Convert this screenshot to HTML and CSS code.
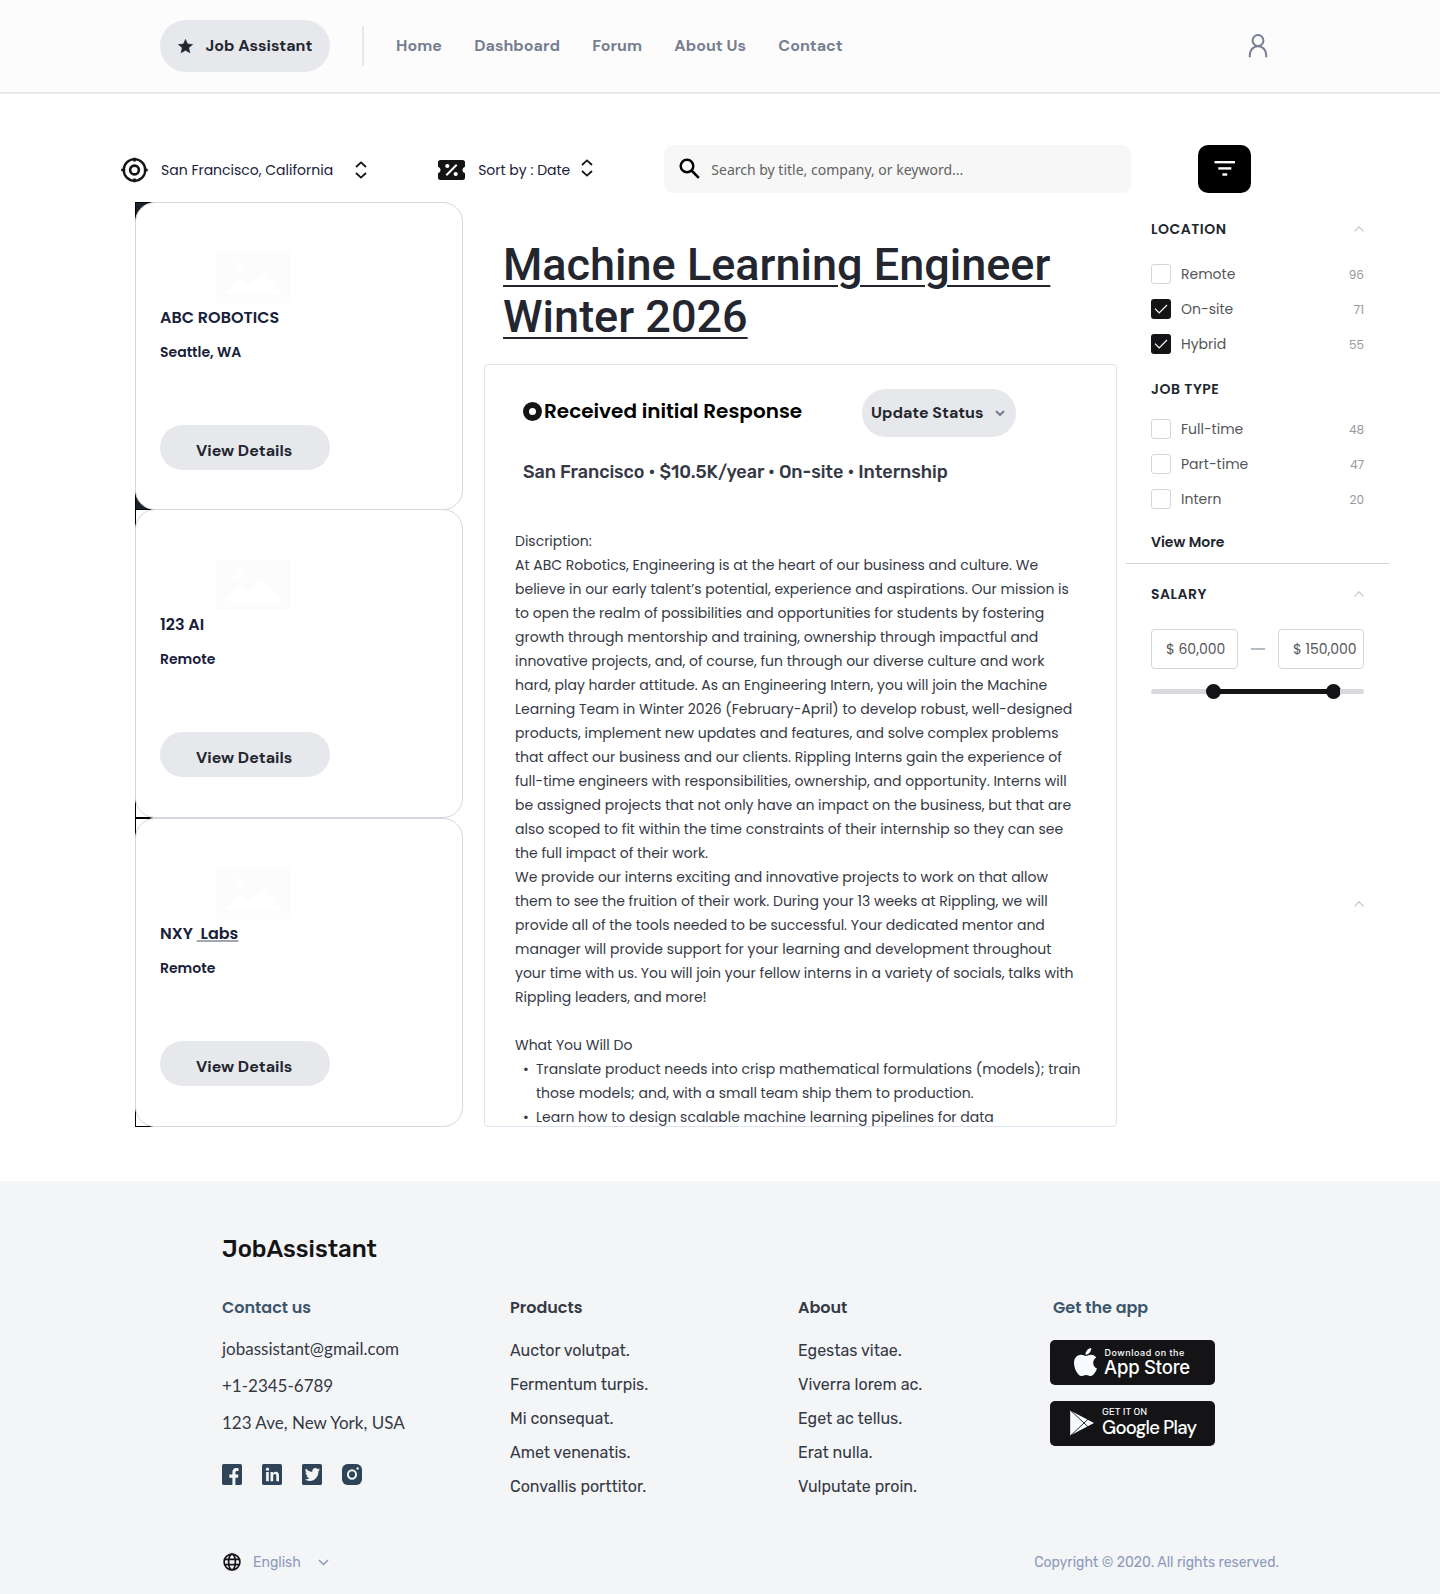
FILE: index.html
```html
<!DOCTYPE html>
<html lang="en">
<head>
<meta charset="utf-8">
<title>Job Assistant</title>
<link rel="stylesheet" href="styles.css">
</head>
<body>
<header class="topbar">
  <a class="brand"><svg width="15" height="15" viewBox="0 0 15 15"><path d="M7.5.4l2 4.6 5.1.5-3.9 3.3 1.2 5L7.5 11.200l-4.4 2.600 1.200-5L.4 5.500 5.500 5z" fill="#23262f" stroke="#23262f" stroke-width=".6" stroke-linejoin="round"/></svg>Job Assistant</a>
  <span class="topbar-rule"></span>
  <nav class="nav"><a>Home</a><a>Dashboard</a><a>Forum</a><a>About Us</a><a>Contact</a></nav>
  <svg class="user" width="20" height="24" viewBox="0 0 20 24" fill="none" stroke="#777e91" stroke-width="2"><ellipse cx="10" cy="6.500" rx="5.400" ry="5.500"/><path d="M1.800 23.200v-2.200C1.800 16 5.300 12.200 10 12.200s8.200 3.800 8.200 8.800v2.200"/></svg>
</header>

<main>
  <div class="toolbar">
    <svg class="tool-icon" width="27" height="26" viewBox="0 0 27 26" fill="none" stroke="#141416"><circle cx="13.500" cy="13" r="10.800" stroke-width="2.300"/><circle cx="13.500" cy="13" r="4.400" stroke-width="2.600"/><path d="M13.500.700v3.800M13.500 21.500v3.800M.200 13h4M22.800 13h4" stroke-width="2.600"/></svg>
    <span class="tool-label">San Francisco, California</span>
    <svg class="updown" width="12" height="18" viewBox="0 0 12 18" fill="none" stroke="#141416" stroke-width="1.800"><path d="M1 6l5-4.600L11 6M1 12l5 4.600 5-4.600"/></svg>
    <svg class="ticket" width="27" height="20" viewBox="0 0 27 20"><path d="M2.500 0h22A2.500 2.500 0 0 1 27 2.500v4.200a3.400 3.400 0 0 0 0 6.600v4.200a2.500 2.500 0 0 1-2.500 2.500h-22A2.500 2.500 0 0 1 0 17.500v-4.200a3.400 3.400 0 0 0 0-6.600V2.500A2.500 2.500 0 0 1 2.500 0z" fill="#141416"/><path d="M8.300 15.200L18.700 4.800" stroke="#fff" stroke-width="2"/><circle cx="9.300" cy="6" r="2.100" fill="#fff"/><circle cx="17.700" cy="14" r="2.100" fill="#fff"/></svg>
    <span class="tool-label">Sort by : Date</span>
    <svg class="updown sort" width="12" height="18" viewBox="0 0 12 18" fill="none" stroke="#141416" stroke-width="1.800"><path d="M1 6l5-4.600L11 6M1 12l5 4.600 5-4.600"/></svg>
    <div class="search">
      <svg width="22" height="22" viewBox="0 0 22 22" fill="none" stroke="#000" stroke-width="2.500"><circle cx="8" cy="8" r="6.300"/><path d="M12.500 12.500l7.300 7.300"/></svg>
      <span>Search by title, company, or keyword...</span>
    </div>
    <button class="filter"><svg width="22" height="16" viewBox="0 0 22 16" fill="#fff"><rect x=".500" y="0" width="20.500" height="2.400"/><rect x="4.300" y="6.200" width="13" height="2.400"/><rect x="8.400" y="12.300" width="4.800" height="2.400"/></svg></button>
  </div>

  <div class="columns">
    <div class="jobs">
      <div class="job first">
        <article class="card">
          <svg class="thumb" width="75" height="51" viewBox="0 0 75 51"><rect width="75" height="51" rx="1" fill="#fcfcfd"/><circle cx="23.300" cy="14.700" r="5.300" fill="#fff"/><path d="M8 42.300l16-17 8 8.500L46.500 21l20 21.300z" fill="#fff"/></svg>
          <h2>ABC ROBOTICS</h2><p>Seattle, WA</p><button>View Details</button>
        </article>
      </div>
      <div class="job">
        <article class="card">
          <svg class="thumb" width="75" height="51" viewBox="0 0 75 51"><rect width="75" height="51" rx="1" fill="#fcfcfd"/><circle cx="23.300" cy="14.700" r="5.300" fill="#fff"/><path d="M8 42.300l16-17 8 8.500L46.500 21l20 21.300z" fill="#fff"/></svg>
          <h2>123 AI</h2><p>Remote</p><button>View Details</button>
        </article>
      </div>
      <div class="job">
        <article class="card">
          <svg class="thumb" width="75" height="51" viewBox="0 0 75 51"><rect width="75" height="51" rx="1" fill="#fcfcfd"/><circle cx="23.300" cy="14.700" r="5.300" fill="#fff"/><path d="M8 42.300l16-17 8 8.500L46.500 21l20 21.300z" fill="#fff"/></svg>
          <h2>NXY <u> Labs</u></h2><p>Remote</p><button>View Details</button>
        </article>
      </div>
    </div>

    <section class="detail">
      <h1>Machine Learning Engineer Winter 2026</h1>
      <div class="panel">
        <div class="status">
          <svg width="19" height="19" viewBox="0 0 19 19"><circle cx="9.500" cy="9.500" r="6.500" fill="none" stroke="#141416" stroke-width="6"/></svg>
          <strong>Received initial Response</strong>
          <button class="update">Update Status<svg width="10" height="7" viewBox="0 0 10 7" fill="none" stroke="#777e91" stroke-width="2"><path d="M1 1l4 4 4-4"/></svg></button>
        </div>
        <p class="meta">San Francisco • $10.5K/year • On-site • Internship</p>
        <div class="copy">
          <p>Discription:</p>
          <p>At ABC Robotics, Engineering is at the heart of our business and culture. We believe in our early talent’s potential, experience and aspirations. Our mission is to open the realm of possibilities and opportunities for students by fostering growth through mentorship and training, ownership through impactful and innovative projects, and, of course, fun through our diverse culture and work hard, play harder attitude. As an Engineering Intern, you will join the Machine Learning Team in Winter 2026 (February-April) to develop robust, well-designed products, implement new updates and features, and solve complex problems that affect our business and our clients. Rippling Interns gain the experience of full-time engineers with responsibilities, ownership, and opportunity. Interns will be assigned projects that not only have an impact on the business, but that are also scoped to fit within the time constraints of their internship so they can see the full impact of their work.</p>
          <p>We provide our interns exciting and innovative projects to work on that allow them to see the fruition of their work. During your 13 weeks at Rippling, we will provide all of the tools needed to be successful. Your dedicated mentor and manager will provide support for your learning and development throughout your time with us. You will join your fellow interns in a variety of socials, talks with Rippling leaders, and more!</p>
          <p class="sub">What You Will Do</p>
          <ul>
            <li>Translate product needs into crisp mathematical formulations (models); train those models; and, with a small team ship them to production.</li>
            <li>Learn how to design scalable machine learning pipelines for data</li>
          </ul>
        </div>
      </div>
    </section>

    <aside class="filters">
      <div class="group">
        <div class="head"><h3>LOCATION</h3><svg width="10" height="6" viewBox="0 0 10 6" fill="none" stroke="#c4c6c9" stroke-width="1.200"><path d="M.500 5.300L5 .800l4.500 4.500"/></svg></div>
        <div class="options">
          <label><i></i>Remote<b>96</b></label>
          <label><i class="on"><svg width="14" height="10" viewBox="0 0 14 10" fill="none" stroke="#fff" stroke-width="1.200"><path d="M1 4.600l4.200 4.200L13 1"/></svg></i>On-site<b>71</b></label>
          <label><i class="on"><svg width="14" height="10" viewBox="0 0 14 10" fill="none" stroke="#fff" stroke-width="1.200"><path d="M1 4.600l4.200 4.200L13 1"/></svg></i>Hybrid<b>55</b></label>
        </div>
        <div class="head type"><h3>JOB TYPE</h3></div>
        <div class="options tight">
          <label><i></i>Full-time<b>48</b></label>
          <label><i></i>Part-time<b>47</b></label>
          <label><i></i>Intern<b>20</b></label>
        </div>
        <a class="more">View More</a>
      </div>
      <div class="group salary">
        <div class="head"><h3>SALARY</h3><svg width="10" height="6" viewBox="0 0 10 6" fill="none" stroke="#c4c6c9" stroke-width="1.200"><path d="M.500 5.300L5 .800l4.500 4.500"/></svg></div>
        <div class="range"><span class="amount">$ 60,000</span><span class="dash"></span><span class="amount">$ 150,000</span></div>
        <div class="slider"><span class="knob"></span><span class="fill"></span><span class="knob"></span></div>
        <div class="head last"><svg width="10" height="6" viewBox="0 0 10 6" fill="none" stroke="#c4c6c9" stroke-width="1.200"><path d="M.500 5.300L5 .800l4.500 4.500"/></svg></div>
      </div>
    </aside>
  </div>
</main>

<footer class="footer">
  <div class="logo">JobAssistant</div>
  <div class="foot-cols">
    <div class="contact">
      <h4 class="blue">Contact us</h4>
      <p>jobassistant@gmail.com</p><p>+1-2345-6789</p><p>123 Ave, New York, USA</p>
      <div class="social">
        <svg width="20" height="21" viewBox="0 0 20 20" preserveAspectRatio="none"><rect width="20" height="20" rx="1.600" fill="#2f4459"/><path d="M10.400 20v-7H7.300v-2.900h3.100V7.800c0-2.600 1.500-4 3.800-4 .900 0 1.700.100 2.300.200v2.700h-1.600c-1.100 0-1.500.600-1.500 1.500v1.900h3l-.400 2.900h-2.600v7z" fill="#f4f5f7"/></svg>
        <svg width="20" height="21" viewBox="0 0 20 20" preserveAspectRatio="none"><rect width="20" height="20" rx="1.600" fill="#2f4459"/><g fill="#f4f5f7"><circle cx="5.500" cy="4.900" r="1.600"/><path d="M4.100 7.700h2.700v8.800H4.100zM8.500 7.700h2.600v1.200c.500-.900 1.400-1.500 2.700-1.500 2.500 0 3.200 1.600 3.200 4v5.100h-2.700v-4.600c0-1.200-.200-2.300-1.500-2.300s-1.600 1-1.600 2.200v4.700H8.500z"/></g></svg>
        <svg width="20" height="21" viewBox="0 32 448 448" preserveAspectRatio="none"><path fill="#2f4459" d="M410 32H38C15 32 0 47 0 70v372c0 23 15 38 38 38h372c23 0 38-15 38-38V70c0-23-15-38-38-38zm-42 154c.200 3 .200 6 .200 9 0 92-70 198-198 198-39.500 0-76-11.500-106.800-31.200 5.600.600 11 .800 16.800.800 32.500 0 62.500-11 86.400-29.700-30.600-.600-56.200-20.700-65-48.300 10.700 1.600 20.400 1.600 31.400-1.300-31.800-6.500-55.700-34.500-55.700-68.300v-.800c9.200 5.200 20 8.400 31.400 8.800a69.400 69.400 0 0 1-31-57.900c0-13 3.400-24.800 9.500-35.100 34.200 42.200 85.700 69.800 143.400 72.800-9.900-47.200 25.400-85.500 67.900-85.500 20 0 38.100 8.400 50.800 22 15.700-3 30.800-8.800 44.100-16.800-5.200 16.100-16.100 29.700-30.500 38.300 14-1.500 27.600-5.400 40.100-10.800-9.400 13.900-21.300 26.200-35 36z"/></svg>
        <svg width="20" height="21" viewBox="0 0 20 20" preserveAspectRatio="none"><rect width="20" height="20" rx="5.500" fill="#2f4459"/><circle cx="10" cy="10" r="4" fill="none" stroke="#f4f5f7" stroke-width="2"/><circle cx="15.600" cy="4.300" r="1.200" fill="#f4f5f7"/></svg>
      </div>
    </div>
    <div class="links products"><h4>Products</h4><a>Auctor volutpat.</a><a>Fermentum turpis.</a><a>Mi consequat.</a><a>Amet venenatis.</a><a>Convallis porttitor.</a></div>
    <div class="links about"><h4>About</h4><a>Egestas vitae.</a><a>Viverra lorem ac.</a><a>Eget ac tellus.</a><a>Erat nulla.</a><a>Vulputate proin.</a></div>
    <div class="apps">
      <h4 class="blue">Get the app</h4>
      <a class="badge apple">
        <svg width="23" height="28" viewBox="4 32 376 448" preserveAspectRatio="none"><path fill="#f7fbff" d="M318.700 268.700c-.200-36.700 16.400-64.400 50-84.800-18.800-26.900-47.200-41.700-84.700-44.600-35.500-2.800-74.300 20.700-88.500 20.700-15 0-49.400-19.700-76.400-19.700C63.300 141.200 4 184.800 4 273.500q0 39.300 14.400 81.200c12.800 36.700 59 126.700 107.200 125.200 25.200-.600 43-17.900 75.800-17.900 31.800 0 48.300 17.900 76.400 17.900 48.600-.700 90.400-82.500 102.600-119.300-65.200-30.700-61.700-90-61.700-91.900zm-56.600-164.200c27.300-32.400 24.800-61.900 24-72.500-24.100 1.400-52 16.400-67.900 34.900-17.500 19.800-27.800 44.300-25.600 71.900 26.100 2 49.900-11.400 69.500-34.300z"/></svg>
        <span><small>Download on the</small><em>App Store</em></span>
      </a>
      <a class="badge play">
        <svg width="24" height="26" viewBox="0 0 24 26"><path d="M.200.500L24 13 .200 25.500z" fill="#f7fbff"/><path d="M1 .800L18.300 17M1 25.200L18.300 9" stroke="#141416" stroke-width=".900"/></svg>
        <span><small>GET IT ON</small><em>Google Play</em></span>
      </a>
    </div>
  </div>
  <div class="foot-end">
    <svg width="18" height="18" viewBox="0 0 18 18" fill="none" stroke="#141416" stroke-width="1.700"><circle cx="9" cy="9" r="7.900"/><ellipse cx="9" cy="9" rx="3.400" ry="7.900"/><path d="M1.500 6.300h15M1.500 11.700h15"/></svg>
    <span class="lang">English</span>
    <svg width="11" height="7" viewBox="0 0 11 7" fill="none" stroke="#8c9bbd" stroke-width="1.500"><path d="M1 1l4.500 4.500L10 1"/></svg>
    <span class="copyright">Copyright © 2020. All rights reserved.</span>
  </div>
</footer>
</body>
</html>
```
FILE: styles.css
```css
*,*::before{box-sizing:border-box}
body{margin:0;width:1440px;background:#fff;font-family:Poppins,Inter,sans-serif;font-size:14px;color:#353945}
h1,h2,h3,h4,p,ul{margin:0;padding:0}
svg{display:block;flex:none}
button{border:0;padding:0;font:inherit}

.topbar{display:flex;align-items:center;height:94px;padding:0 172px 0 160px;background:#fcfcfd;border-bottom:2px solid #e6e8ec;font:700 16px/24px "DM Sans",Inter,sans-serif}
.brand{display:flex;align-items:center;gap:12.6px;width:170px;height:52px;padding-left:18px;border-radius:26px;background:#e6e8ec;color:#23262f}
.topbar-rule{width:2px;height:40px;margin:0 32px;background:#e6e8ec}
.nav{display:flex;gap:32.4px;color:#777e91}
.user{margin-left:auto}

.toolbar{display:flex;align-items:center;height:48px;margin-top:51px;padding-left:121px;color:#18213a}
.tool-icon{margin-top:1px}
.tool-label{margin-left:13px;padding-top:1px;line-height:24px;white-space:nowrap}
.updown{margin:1px 0 0 22px}
.updown.sort{margin:-2px 0 0 11px}
.ticket{margin:1px 0 0 71px}
.search{display:flex;align-items:center;gap:10.5px;width:467px;height:48px;margin-left:70.500px;padding-left:15px;border-radius:9px;background:#f7f7f7;font-family:"Noto Sans",sans-serif;color:#626262}
.filter{display:flex;align-items:center;justify-content:center;width:53px;height:48px;margin-left:67.500px;border-radius:10px;background:#000}

.columns{display:flex;align-items:flex-start;padding:9px 0 0 135px}
.jobs{width:328px}
.job{position:relative;height:309px}
.job.first{height:308px;margin-bottom:-1px}
/* square corners showing behind the rounded card */
.job::before{content:"";position:absolute;left:0;top:0;width:18px;height:100%;border:1px solid #000;border-right:0;background:#fff}
.job.first::before{background:#1c2229}
.card{position:relative;height:100%;padding:49px 24px 0;border:1px solid #d5d7de;border-radius:20px;background:#fff;color:#18213a}
.thumb{margin-left:56px}
.card h2{font-size:16px;font-weight:600;line-height:24px;margin-top:3px;white-space:pre}
.card u{text-decoration-color:#a3a7b1;text-decoration-thickness:2px;text-underline-offset:1px;text-decoration-skip-ink:none}
.card p{font-weight:600;line-height:20px;margin-top:12px}
.card button{display:block;width:170px;height:45px;margin-top:63px;padding:6px 0 0 36px;border-radius:23px;background:#e6e8ec;color:#23262f;font:700 16px/24px "DM Sans",Inter,sans-serif;text-align:left}

.detail{width:633px;margin-left:21px}
h1{width:580px;margin:37px 0 21px 19px;font:500 45px/52px Roboto,sans-serif;color:#23262f;text-decoration:underline;text-decoration-thickness:2px;text-underline-offset:5px}
.panel{height:763px;overflow:hidden;border:1px solid #dfe3ee;border-radius:4px}
.status{display:flex;align-items:center;height:48px;margin:24px 0 0 38px}
.status strong{margin:-5px 0 0 2px;width:318px;font-size:20px;font-weight:600;line-height:30px;color:#000}
.status svg{margin-top:-4px}
.update{display:flex;align-items:center;gap:11px;width:154px;height:48px;padding-left:9px;border-radius:24px;background:#e6e8ec;color:#23262f;font:700 16px/24px "DM Sans",Inter,sans-serif;white-space:nowrap}
.update svg{margin:1px 0 0}
.meta{margin:23px 0 0 38px;font:500 18px/24px Rubik,Inter,sans-serif;letter-spacing:-.06px}
.copy{width:566px;margin:45px 0 0 30px;line-height:24px}
.copy .sub{margin-top:24px}
.copy ul{list-style:none}
.copy li{position:relative;padding-left:21px}
.copy li::before{content:"•";position:absolute;left:8px}

.filters{width:263px;margin-left:9px;padding-top:17px;color:#545659}
.group{padding:0 25px}
.head{display:flex;align-items:center;justify-content:space-between;height:20px}
.head h3,.more{font-size:14px;font-weight:600;line-height:20px;color:#1e272e}
.head h3{letter-spacing:.5px}
.head.type{margin-top:25px}
.options{display:grid;gap:15px;margin-top:25px}
.options.tight{margin-top:20px}
.options label{display:flex;align-items:center;height:20px;line-height:20px}
.options i{display:flex;align-items:center;justify-content:center;width:20px;height:20px;margin-right:10px;border:1px solid #d5d6d9;border-radius:3px}
.options i.on{border:0;background:#141416}
.options b{margin:1px 0 0 auto;font-size:12px;font-weight:400;color:#97999c}
.more{display:block;margin-top:23px}
.salary{margin-top:11px;padding-top:20px;border-top:1px solid #d5d6d9}
.range{display:flex;align-items:center;margin-top:25px}
.amount{width:87px;height:40px;padding-left:14px;border:1px solid #d5d6d9;border-radius:4px;line-height:38px;white-space:nowrap}
.dash{width:14px;height:2px;margin:0 13px;background:#b4bbc1}
.amount:last-child{width:86px}
.slider{display:flex;align-items:center;height:15px;margin-top:15px}
.slider::before,.slider::after{content:"";width:56px;height:5px;margin-right:-1px;border-radius:3px 0 0 3px;background:#d8d9dc}
.slider::after{flex:1;margin:0 0 0 -1px;border-radius:0 3px 3px 0}
.knob{width:15px;height:15px;border-radius:50%;background:#141416}
.fill{width:107px;height:5px;margin:0 -1px;background:#141416}
.head.last{justify-content:flex-end;margin-top:195px}

.footer{height:413px;margin-top:54px;padding:50px 161px 0 222px;background:#f4f5f7;font-family:Rubik,Inter,sans-serif;color:#353945}
.logo{font-size:24px;font-weight:500;line-height:36px;color:#141416}
.foot-cols{display:flex;margin-top:28px;height:214px}
.footer h4{font:600 16px/24px Poppins,Inter,sans-serif}
.footer h4.blue{color:#3b556d}
.contact{width:288px;padding-top:1px}
.contact p{font:17px/37px Lato,sans-serif}
.contact h4{margin-bottom:10px}
.social{display:flex;gap:20px;margin-top:23px}
.links{display:flex;flex-direction:column;width:288px;padding-top:1px;font-size:16px;line-height:34px}
.links h4{margin-bottom:14px}
.links.about{width:252px}
.apps{padding-top:1px}
.apps h4{margin:0 0 20px 3px}
.badge{display:flex;width:165px;height:45px;margin-bottom:16px;border-radius:5px;background:#141416;color:#fff}
.badge span{display:flex;flex-direction:column;white-space:nowrap}
.badge em{font-style:normal}
.apple{padding:8px 0 0 24px;gap:7px}
.apple small{font:500 9px/9px Inter,sans-serif;letter-spacing:.52px;margin-left:.5px}
.apple em{font:500 18.500px/20px Inter,sans-serif;letter-spacing:-.2px}
.play{padding:9px 0 0 20px;gap:8px}
.play small{font:400 10px/10px Rubik,sans-serif;margin-top:-3px}
.play em{font:500 18.500px/23px "DM Sans",Inter,sans-serif;letter-spacing:-.7px}
.foot-end{display:flex;align-items:center;margin-top:40px;height:26px;padding-left:1px;color:#8c9bbd}
.foot-end{font-size:14px}
.lang{width:65px;margin-left:12px}
.copyright{margin-left:auto}
```
